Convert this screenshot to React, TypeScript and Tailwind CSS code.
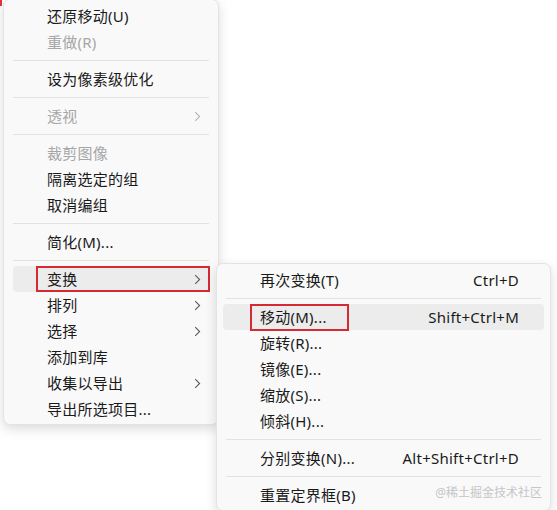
import { Fragment } from "react";

type Item = { label: string; sub?: boolean; off?: boolean; sep?: boolean; hot?: boolean; key?: string };

const MAIN: Item[] = [
  { label: "还原移动(U)" },
  { label: "重做(R)", off: true },
  { label: "", sep: true },
  { label: "设为像素级优化" },
  { label: "", sep: true },
  { label: "透视", off: true, sub: true },
  { label: "", sep: true },
  { label: "裁剪图像", off: true },
  { label: "隔离选定的组" },
  { label: "取消编组" },
  { label: "", sep: true },
  { label: "简化(M)..." },
  { label: "", sep: true },
  { label: "变换", sub: true, hot: true },
  { label: "排列", sub: true },
  { label: "选择", sub: true },
  { label: "添加到库" },
  { label: "收集以导出", sub: true },
  { label: "导出所选项目..." },
];

const SUB: Item[] = [
  { label: "再次变换(T)", key: "Ctrl+D" },
  { label: "", sep: true },
  { label: "移动(M)...", key: "Shift+Ctrl+M", hot: true },
  { label: "旋转(R)..." },
  { label: "镜像(E)..." },
  { label: "缩放(S)..." },
  { label: "倾斜(H)..." },
  { label: "", sep: true },
  { label: "分别变换(N)...", key: "Alt+Shift+Ctrl+D" },
  { label: "", sep: true },
  { label: "重置定界框(B)" },
];

function Chevron({ off }: { off?: boolean }) {
  return (
    <svg width="7" height="11" viewBox="0 0 7 11" className={off ? "text-[#b4b4b4]" : "text-[#5a5a5a]"}>
      <path d="M1.2 1.2 L5.6 5.5 L1.2 9.8" fill="none" stroke="currentColor" strokeWidth="1.1" />
    </svg>
  );
}

export default function App() {
  return (
    <div
      className="relative h-[510px] w-[557px] overflow-hidden bg-white text-[15px] tracking-[0.25px] text-[#1a1a1a]"
      style={{ fontFamily: '"Segoe UI", "Noto Sans", "Noto Sans CJK SC", sans-serif' }}
    >
      <div className="pointer-events-none absolute left-0 top-0 h-[6px] w-[2px] bg-[#e0303a]" />
      <div className="ml-[3px] mt-[-1px] w-[216px] rounded-[7px] border border-[#e3e3e3] bg-[#f9f9f9] pb-[2px] pt-[3px] shadow-[0_4px_12px_rgba(0,0,0,0.14)]">
        {MAIN.map((it, i) =>
          it.sep ? (
            <div key={i} className="flex h-[11px] items-center px-[9px]">
              <div className="h-px w-full bg-[#e2e2e2]" />
            </div>
          ) : (
            <div
              key={i}
              className={`relative mx-[9px] flex h-[26px] items-center rounded-[4px] pl-[34px] pr-[8px] ${it.hot ? "bg-[#ececec]" : ""} ${it.off ? "text-[#a6a6a6]" : ""}`}
            >
              <span className="flex-1 leading-none">{it.label}</span>
              {it.sub && <Chevron off={it.off} />}
              {it.hot && <div className="absolute bottom-[0px] left-[23px] right-[-1px] top-[0px] border-2 border-[#d42a31]" />}
            </div>
          ),
        )}
      </div>

      <div className="absolute left-[216px] top-[263px] w-[335px] rounded-[7px] border border-[#e3e3e3] bg-[#f9f9f9] pb-[2px] pt-[3px] shadow-[0_4px_12px_rgba(0,0,0,0.14)]">
        {SUB.map((it, i) => (
          <Fragment key={i}>
            {it.sep ? (
              <div className="flex h-[11px] items-center px-[9px]">
                <div className="h-px w-full bg-[#e2e2e2]" />
              </div>
            ) : (
              <div
                className={`relative mx-[6px] flex h-[26px] items-center rounded-[4px] pl-[37px] pr-[25px] ${it.hot ? "bg-[#ececec]" : ""}`}
              >
                <span className="flex-1 leading-none">{it.label}</span>
                {it.key && <span className="leading-none">{it.key}</span>}
                {it.hot && <div className="absolute bottom-[-1px] left-[27px] top-[0px] w-[99px] border-2 border-[#d42a31]" />}
              </div>
            )}
          </Fragment>
        ))}
        <div className="absolute bottom-[11px] right-[8px] text-[12px] leading-none tracking-normal text-[#c6c6c6]">@稀土掘金技术社区</div>
      </div>
    </div>
  );
}
